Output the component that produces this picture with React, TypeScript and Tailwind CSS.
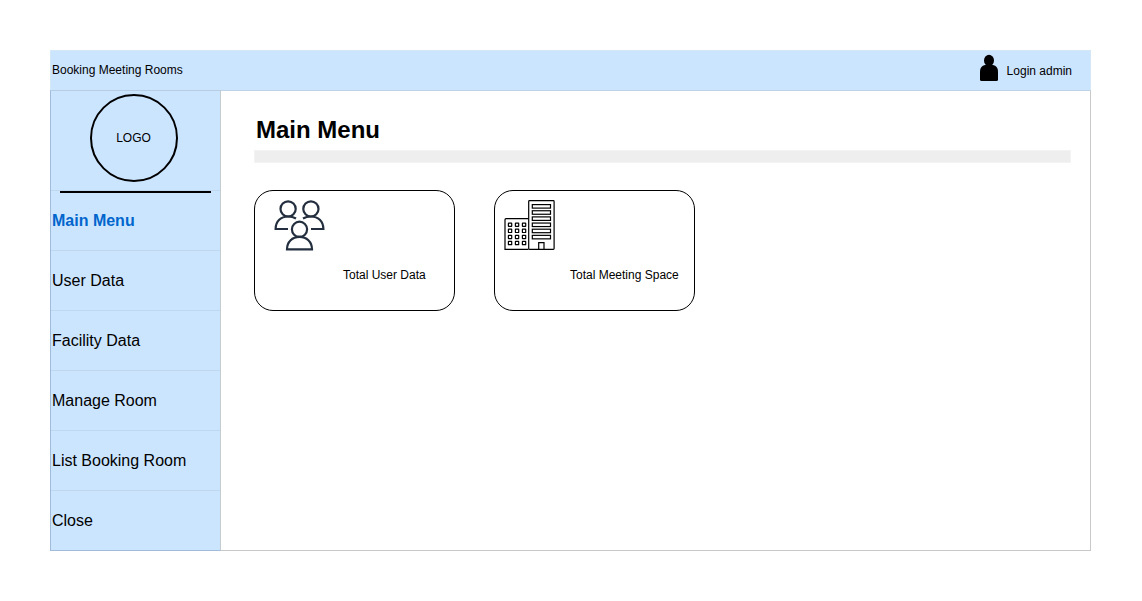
import React from "react";

const menuItems = ["Main Menu", "User Data", "Facility Data", "Manage Room", "List Booking Room", "Close"];

function PersonIcon() {
  return (
    <svg className="h-[28px] w-[20px] shrink-0" viewBox="979 54 20 28" fill="#000">
      <ellipse cx="989" cy="60.5" rx="5" ry="5.8" />
      <path d="M985 65H993Q998 66 998 71.500V79.500Q998 81 996.500 81H981.500Q980 81 980 79.500V71.500Q980 66 985 65Z" />
    </svg>
  );
}

function UsersIcon() {
  return (
    <svg className="h-[51px] w-[51px]" viewBox="274 200 51 51" fill="none" stroke="#232f3e" strokeWidth="2.2">
      <circle cx="288.1" cy="208.900" r="7.600" />
      <circle cx="310.900" cy="208.900" r="7.600" />
      <circle cx="299.500" cy="229.300" r="7.600" />
      <path d="M288 229H275.600C275.600 221 281 216.500 288 216.500C291.300 216.500 293.800 217.200 296 218.500" />
      <path d="M311 229H323.400C323.400 221 318 216.500 311 216.500C307.700 216.500 305.200 217.200 303 218.500" />
      <path d="M287 249.300C287 241.500 292.500 236.900 299.500 236.900S312 241.500 312 249.300Z" />
    </svg>
  );
}

function BuildingIcon() {
  const rows = [0, 1, 2, 3];
  const cols = [0, 1, 2];
  const bars = [0, 1, 2, 3, 4, 5];
  return (
    <svg className="h-[51px] w-[51px]" viewBox="504 200 51 51" fill="none" stroke="#000" strokeWidth="1.2">
      <path d="M528.500 218.700H506Q505 218.700 505 219.700V249.300H528.500" />
      <rect x="528.700" y="200.700" width="25.400" height="48.600" rx="0.800" />
      {rows.map((r) =>
        cols.map((c) => (
          <rect key={`${r}-${c}`} x={508.4 + c * 7} y={223.1 + r * 6.1} width="3.300" height="3.300" rx="0.300" />
        ))
      )}
      {bars.map((b) => (
        <rect key={b} x="532.300" y={204.6 + b * 6.15} width="18.200" height="3.500" />
      ))}
      <path d="M538.700 249V242.600H544V249" />
    </svg>
  );
}

export default function App() {
  return (
    <div className="h-[601px] w-[1142px] overflow-hidden bg-white pt-[50px] pl-[50px] text-black [font-family:'Liberation_Sans',Arial,sans-serif]">
      <div className="w-[1041px]">
        <header className="flex h-10 items-start justify-between border border-b-0 border-[#d5e8f8] bg-[#cce5ff] pr-[18px] pl-px text-xs">
          <span className="mt-[11px]">Booking Meeting Rooms</span>
          <div className="flex items-start gap-2 pt-[3px]">
            <PersonIcon />
            <span className="mt-[9px]">Login admin</span>
          </div>
        </header>
        <div className="flex h-[461px]">
          <aside className="flex w-[171px] flex-col border border-[#a3bbdb] border-t-[#b6cde4] border-r-[#c4ccd0] bg-[#cce5ff]">
            <div className="flex h-[99px] justify-center pt-[3px] pr-[3px]">
              <div className="flex h-[88px] w-[88px] items-center justify-center rounded-full border-2 border-black pr-px text-xs">
                LOGO
              </div>
            </div>
            <nav>
              {menuItems.map((item, i) => (
                <div
                  key={item}
                  className={
                    i === 0
                      ? "h-[60px] border-t border-[#bfd8ef] text-base font-bold text-[#0066cc]"
                      : "flex h-[60px] items-center border-t border-[#bfd8ef] pl-px text-base"
                  }
                >
                  {i === 0 ? (
                    <>
                      <div className="ml-[9px] h-[2px] w-[151px] bg-black" />
                      <div className="flex h-[57px] items-center pb-[2px] pl-px">{item}</div>
                    </>
                  ) : (
                    item
                  )}
                </div>
              ))}
            </nav>
          </aside>
          <main className="flex-1 border border-l-0 border-[#c9c9c9] border-t-[#bed3e8] pl-[33px]">
            <h1 className="mt-[21px] pl-[2px] text-2xl leading-9 font-bold">Main Menu</h1>
            <div className="mt-[2px] h-[13px] w-[817px] border border-[#f3f3f3] bg-[#eeeeee]" />
            <div className="mt-[27px] flex gap-[39px]">
              <section className="h-[121px] w-[201px] rounded-[19px] border border-black pt-[9px]">
                <div className="pl-[19px]">
                  <UsersIcon />
                </div>
                <p className="mt-[16px] pl-[88px] text-xs">Total User Data</p>
              </section>
              <section className="h-[121px] w-[201px] rounded-[19px] border border-black pt-[9px]">
                <div className="pl-[9px]">
                  <BuildingIcon />
                </div>
                <p className="mt-[16px] pl-[75px] text-xs">Total Meeting Space</p>
              </section>
            </div>
          </main>
        </div>
      </div>
    </div>
  );
}
